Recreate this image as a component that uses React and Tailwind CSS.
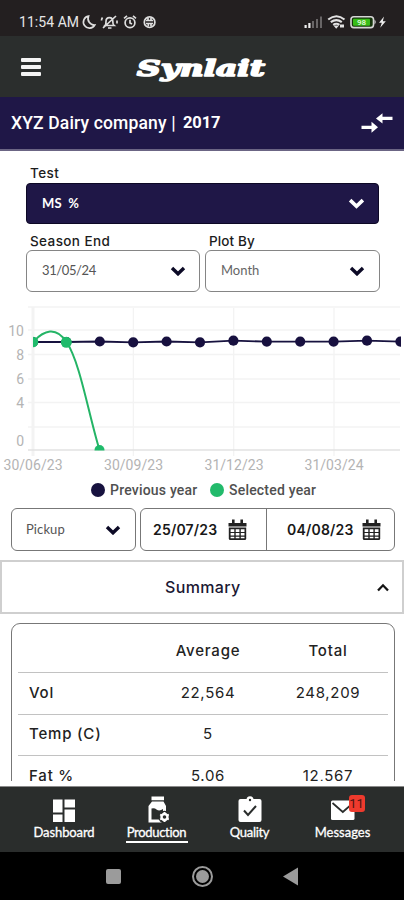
import React from "react";

const Chevron = ({ color = "#0c0a26", w = 16, className = "" }) => (
  <svg width={w} height={(w * 10) / 16} viewBox="0 0 16 10" className={className}>
    <path d="M2 2 L8 7.8 L14 2" fill="none" stroke={color} strokeWidth="3.4" />
  </svg>
);

const Calendar = () => (
  <svg width="19" height="22" viewBox="0 0 19 22" className="shrink-0">
    <path d="M0.5 4 h18 v3.4 h-18z M4 0.5 h2.6 v4 h-2.6z M12.4 0.5 h2.6 v4 h-2.6z" fill="#222" />
    <path d="M0.8 8.400 h17.4 v11.100 q0 1.5 -1.5 1.5 h-14.4 q-1.5 0 -1.5 -1.5z" fill="#222" />
    <path d="M2.600 10.200h3.700v2.700h-3.700z M7.700 10.200h3.700v2.700h-3.700z M12.800 10.200h3.700v2.700h-3.700z M2.600 14.100h3.700v2.400h-3.700z M7.700 14.100h3.700v2.400h-3.700z M12.800 14.100h3.700v2.400h-3.700z M2.600 17.700h3.700v1.600h-3.700z M7.700 17.700h3.700v1.600h-3.700z M12.800 17.700h3.700v1.600h-3.700z" fill="#fff" />
  </svg>
);

function StatusBar() {
  return (
    <div className="flex h-9 shrink-0 items-center bg-[#231f20] pt-2 pl-[19px] font-['Roboto',sans-serif] text-[#e6e6e6]">
      <span className="w-[61px] text-[14px] tracking-[0.05px] whitespace-nowrap">11:54 AM</span>
      <svg width="76" height="16" viewBox="80 14 76 16" fill="none" stroke="#dedede" strokeWidth="1.7" className="shrink-0">
        <path d="M88.5 16.2 a6 6 0 1 0 6.2 8.8 a6.4 6.4 0 0 1 -6.2 -8.8z" />
        <path d="M105 25.5 q1 -1 1 -4 q0 -3.8 3.4 -3.8 q3.4 0 3.4 3.8 q0 3 1.2 4z M108 28 h3.5 M103 28 L116 16 M101.5 20.5 q0 -1.5 1 -3 M117 20.5 v3" />
        <circle cx="130" cy="22.7" r="4.9" />
        <path d="M124 18.3 l3 -2.4 M136 18.3 l-3 -2.4 M130 19.8 v3.2 l2 1.1" />
        <circle cx="149.6" cy="22.2" r="5.3" />
        <path d="M146 20.5 h7 M146 23.5 h7 M148 18 v2 M151 18 v2 M148.3 24 v2.5 M151 24 v2.5" />
      </svg>
      <svg width="86" height="18" viewBox="302 13 86 18" className="ml-[146px] shrink-0">
        <path d="M304.5 25h2.2v3h-2.2z M308.3 23h2.2v5h-2.2z" fill="#eee" />
        <path d="M312 21h2v7h-2z M316 19h2v9h-2z M320 16.500h2v11.500h-2z" fill="#686566" />
        <g fill="none" stroke="#e2e2e2" strokeWidth="2.1">
          <path d="M328.200 19.500 q8.300 -6.500 16.300 0 M330.800 22.200 q5.600 -4.200 11 0 M333.200 24.800 q3.200 -2.200 6.200 0" />
        </g>
        <path d="M333.500 25.500 h5.500 l-2.800 3.200z M340 24.500h4v3h-4z" fill="#e2e2e2" />
        <rect x="351" y="16.800" width="22.500" height="10.800" rx="2.800" fill="#16350c" stroke="#d6d6d6" strokeWidth="1.600" />
        <rect x="353" y="18.700" width="17" height="7" rx="1" fill="#38bd18" />
        <path d="M374.500 19.500 q2.500 2.500 0 5z" fill="#d6d6d6" />
        <text x="361.500" y="25.200" textAnchor="middle" fontSize="8" fontWeight="700" fill="#d5f5c9" fontFamily="Roboto, sans-serif">98</text>
        <path d="M384 16.500 l-5 6.300 h2.800 l-1.600 5 l5.600 -6.600 h-3z" fill="#eee" />
      </svg>
    </div>
  );
}

function AppHeader() {
  return (
    <div className="flex h-[61px] shrink-0 items-center bg-[#2b2e2d] pl-[21px]">
      <div className="flex w-5 flex-col gap-[3px]">
        <div className="h-1 rounded-[1px] bg-[#f4f4f4]" />
        <div className="h-1 rounded-[1px] bg-[#f4f4f4]" />
        <div className="h-1 rounded-[1px] bg-[#f4f4f4]" />
      </div>
      <svg width="134" height="40" viewBox="0 0 134 40" className="ml-[93px]">
        <text x="3" y="28.500" fontFamily="'DejaVu Serif', serif" fontWeight="700" fontStyle="italic" fontSize="21.500" textLength="128" lengthAdjust="spacingAndGlyphs" fill="#fff" stroke="#fff" strokeWidth="1.600" strokeLinejoin="round">Synlait</text>
      </svg>
    </div>
  );
}

function TitleBar() {
  return (
    <div className="flex h-[54px] shrink-0 items-center border-b-2 border-[#6b6584] bg-[#1f1747] pl-[11px] font-['Roboto',sans-serif] text-white">
      <span className="w-[172px] text-[17.5px] font-medium tracking-[0.15px] whitespace-nowrap">XYZ Dairy company |</span>
      <span className="text-[16.5px] font-bold tracking-[-0.1px] whitespace-nowrap">2017</span>
      <svg width="32" height="20" viewBox="0 0 32 20" className="mr-[11px] ml-auto">
        <path d="M0.500 12.700h10v-3.900l6.500 5.500 -6.500 5.500v-3.900h-10z M31.500 3.700h-10v-3.500l-6.500 5.200 6.500 5.200v-3.500h10z" fill="#fff" />
      </svg>
    </div>
  );
}

const label = "flex items-center font-['Inter',sans-serif] text-[13.5px] font-medium tracking-[0.4px] text-[#1c1c1c]";

function Filters() {
  return (
    <div className="flex shrink-0 flex-col pt-[13px] pl-[26px]">
      <div className={label + " h-[19px] pl-1"}>Test</div>
      <div className="flex h-[41px] w-[353px] items-center justify-between rounded-[4px] border border-[#0d0825] bg-[#1f1747] pr-[13px] pl-[15px]">
        <span className="font-['Lato',sans-serif] text-[13px] font-bold tracking-[0.1px] whitespace-pre text-white">MS  %</span>
        <Chevron color="#fff" w={17} />
      </div>
      <div className="flex h-[26px] pt-[7px]">
        <div className={label + " h-5 w-[179px] pl-1"}>Season End</div>
        <div className={label + " h-5 pl-1 tracking-[0.1px]!"}>Plot By</div>
      </div>
      <div className="flex gap-[5px]">
        <div className="flex h-[42px] w-[174px] items-center justify-between rounded-[6px] border border-[#858585] bg-white pr-[13px] pl-[15px]">
          <span className="font-['Lato',sans-serif] text-[13px] tracking-[-0.4px] text-[#555]">31/05/24</span>
          <Chevron />
        </div>
        <div className="flex h-[42px] w-[175px] items-center justify-between rounded-[6px] border border-[#858585] bg-white pr-[14px] pl-[15px]">
          <span className="font-['Lato',sans-serif] text-[13px] tracking-[0px] text-[#666]">Month</span>
          <Chevron />
        </div>
      </div>
    </div>
  );
}

const previous = [342, 342, 341.5, 342.3, 341.5, 342.3, 340.7, 341.6, 341.6, 341.6, 340.7, 341.6];
const px = (i) => 33 + i * 33.4;

function Chart() {
  const line = previous.map((y, i) => px(i) + "," + y).join(" ");
  return (
    <svg width="404" height="186" viewBox="0 292 404 186" className="shrink-0">
      <g stroke="#f3f3f3" strokeWidth="1.300">
        {[307, 330, 354.500, 379, 402.500, 427].map((y) => (
          <line key={y} x1="28" x2="400" y1={y} y2={y} />
        ))}
        {[133.400, 233.700, 334].map((x) => (
          <line key={x} x1={x} x2={x} y1="308" y2="456" />
        ))}
        <line x1="33" x2="33" y1="307" y2="456" strokeWidth="3" />
        <line x1="28" x2="400" y1="450" y2="450" stroke="#e2e2e2" strokeWidth="1.500" />
      </g>
      <g fontFamily="Roboto, sans-serif" fontSize="14" fill="#b4b4b4">
        {[["10", 336], ["8", 360], ["6", 384], ["4", 407.500], ["0", 446]].map(([t, y]) => (
          <text key={t} x="24" y={y} textAnchor="end">{t}</text>
        ))}
        {[["30/06/23", 33], ["30/09/23", 133.500], ["31/12/23", 234], ["31/03/24", 334]].map(([t, x]) => (
          <text key={t} x={x - 29.500} y="470" fontSize="14" textLength="59">{t}</text>
        ))}
      </g>
      <clipPath id="plot"><rect x="33" y="300" width="368" height="150.500" /></clipPath>
      <g clipPath="url(#plot)">
        <polyline points={line} fill="none" stroke="#17123f" strokeWidth="1.800" />
        {previous.map((y, i) => (
          <circle key={i} cx={px(i)} cy={y} r="5.100" fill="#17103f" />
        ))}
        <path d="M33 342 C44 330 56 326 66.500 342 C80 362 88 412 99.500 450" fill="none" stroke="#24b466" strokeWidth="2" />
        <circle cx="33" cy="342" r="5.300" fill="#1fbb6b" />
        <circle cx="66.300" cy="342.300" r="5.500" fill="#1fbb6b" />
        <circle cx="99.500" cy="450" r="5" fill="#1fbb6b" />
      </g>
    </svg>
  );
}

function Legend() {
  const text = "font-['Roboto',sans-serif] text-[14px] font-medium whitespace-nowrap text-[#505050]";
  return (
    <div className="flex h-6 shrink-0 items-center pl-[91px]">
      <span className="mr-[5px] size-[14px] rounded-full bg-[#17123f]" />
      <span className={text + " w-[100px] tracking-[0.2px]"}>Previous year</span>
      <span className="mr-[5px] size-[14px] rounded-full bg-[#22ba6b]" />
      <span className={text + " tracking-[0.2px]"}>Selected year</span>
    </div>
  );
}

function PickupRow() {
  const date = "font-['Inter',sans-serif] text-[14px] font-semibold tracking-[0.2px] text-[#181818]";
  return (
    <div className="mt-[6px] flex h-[43px] shrink-0 gap-[4px] pl-[11px]">
      <div className="flex w-[125px] items-center justify-between rounded-[6px] border border-[#777] pr-[14px] pl-[14px]">
        <span className="font-['Lato',sans-serif] text-[13px] tracking-[0.1px] text-[#555]">Pickup</span>
        <Chevron />
      </div>
      <div className="flex w-[255px] rounded-[6px] border border-[#777]">
        <div className="flex w-[126px] items-center justify-between border-r border-[#777] pr-[19px] pl-[12px]">
          <span className={date}>25/07/23</span>
          <Calendar />
        </div>
        <div className="flex flex-1 items-center justify-between pr-[13px] pl-[20px]">
          <span className={date}>04/08/23</span>
          <Calendar />
        </div>
      </div>
    </div>
  );
}

const rows = [
  ["Vol", "22,564", "248,209"],
  ["Temp (C)", "5", ""],
  ["Fat %", "5.06", "12,567"],
];

function Summary() {
  return (
    <>
      <div className="mt-[9px] flex h-[54px] shrink-0 items-center border-2 border-[#cfcfcf] pr-[13px] font-['Inter',sans-serif]">
        <span className="ml-[163px] text-[16px] font-medium tracking-[0.35px] text-[#1b1833]">Summary</span>
        <svg width="12" height="9" viewBox="0 0 12 9" className="ml-auto">
          <path d="M1 7.500 L6 2.300 L11 7.500" fill="none" stroke="#151515" strokeWidth="2.300" />
        </svg>
      </div>
      <div className="mt-[9px] h-[158px] shrink-0 overflow-hidden pl-[11px] font-['Inter',sans-serif] text-[15px] font-medium tracking-[0.8px] text-[#222]">
        <div className="h-[200px] w-[384px] rounded-[9px] border border-[#777] px-[6px]">
          <div className="flex h-[49px] items-center border-b border-[#c2c2c2] pt-[7px]">
            <span className="w-[130px] pl-[11px]" />
            <span className="w-[120px] text-center">Average</span>
            <span className="w-[120px] text-center">Total</span>
          </div>
          {rows.map(([name, avg, total]) => (
            <div key={name} className="flex h-[41.500px] items-center border-b border-[#c2c2c2] pb-px">
              <span className="w-[130px] pl-[11px]">{name}</span>
              <span className="w-[120px] text-center font-normal tracking-[0.7px]">{avg}</span>
              <span className="w-[120px] text-center font-normal tracking-[0.7px]">{total}</span>
            </div>
          ))}
        </div>
      </div>
    </>
  );
}

function TabBar() {
  const text = "font-['Lato',sans-serif] text-[13px] leading-[15px] whitespace-nowrap text-white [-webkit-text-stroke:0.3px_white]";
  return (
    <div className="mt-[5px] flex h-[66px] shrink-0 border-t border-[#8a8a8a] bg-[#2a2d2c] pt-[9px] pl-[18px]">
      <div className="flex w-[92px] flex-col items-center">
        <svg width="24" height="29" viewBox="0 0 24 29">
          <path d="M1 3.500h9.500v13h-9.500z M12.500 3.500h10.500v8h-10.500z M1 18.500h9.500v7.500h-9.500z M12.500 13.500h10.500v12.500h-10.500z" fill="#fff" />
        </svg>
        <span className={text + " tracking-[-0.1px]"}>Dashboard</span>
      </div>
      <div className="flex w-[93px] flex-col items-center">
        <svg width="24" height="29" viewBox="0 0 24 29">
          <path d="M6.500 0.500h12.500v3.800h-12.500z M7 5.500h11.500l2.500 4.500v16.500h-17.500v-16.500z" fill="#fff" />
          <path d="M6.500 12.500 q3 -1 5 1 q3 2 6.500 -.5 v10.500 h-11.500z" fill="#2a2d2c" />
          <circle cx="19.500" cy="21" r="6.300" fill="#2a2d2c" />
          <circle cx="19.500" cy="21" r="3" fill="none" stroke="#fff" strokeWidth="2.400" />
          <path d="M19.500 16v2.500 M19.500 23.500v2.500 M15.200 18.500l2.200 1.250 M21.600 22.250l2.200 1.250 M15.200 23.500l2.200 -1.250 M21.600 19.750l2.200 -1.250" stroke="#fff" strokeWidth="2" />
        </svg>
        <span className={text + " tracking-[-0.3px]"}>Production</span>
        <span className="mt-[1px] h-[2px] w-[62px] shrink-0 bg-white" />
      </div>
      <div className="flex w-[93px] flex-col items-center">
        <svg width="26" height="29" viewBox="0 0 26 29">
          <rect x="1.500" y="3" width="23" height="23" rx="2" fill="#fff" />
          <circle cx="13" cy="3.700" r="3.500" fill="#fff" />
          <circle cx="13" cy="4" r="1.200" fill="#2a2d2c" />
          <path d="M7 14.500 l4 4.500 8 -9" fill="none" stroke="#2a2d2c" strokeWidth="2" />
        </svg>
        <span className={text + " tracking-[-0.3px]"}>Quality</span>
      </div>
      <div className="flex w-[93px] flex-col items-center">
        <div className="relative h-[29px] w-6">
          <svg width="24" height="29" viewBox="0 0 24 29">
            <rect x="0" y="4.500" width="23.500" height="19.500" rx="1.500" fill="#fff" />
            <path d="M1.500 7 l10.300 9 10.300 -9" fill="none" stroke="#2a2d2c" strokeWidth="1.700" />
          </svg>
          <span className="absolute -top-px left-[18px] flex h-[17px] w-4 items-center justify-center rounded-[3px] bg-[#ee3a2d] font-['Roboto',sans-serif] text-[13px] text-[#4c1511]">11</span>
        </div>
        <span className={text}>Messages</span>
      </div>
    </div>
  );
}

function SystemNav() {
  return (
    <div className="flex h-12 shrink-0 items-center bg-black pl-[106px]">
      <div className="size-[15px] rounded-[2px] bg-[#9b9b9b]" />
      <div className="ml-[71px] flex size-[21px] items-center justify-center rounded-full border-2 border-[#9b9b9b]">
        <div className="size-[13px] rounded-full bg-[#9b9b9b]" />
      </div>
      <svg width="15" height="19" viewBox="0 0 15 19" className="ml-[70px]">
        <path d="M0 9.500 L15 0.500 V18.500z" fill="#9b9b9b" />
      </svg>
    </div>
  );
}

export default function App() {
  return (
    <div className="flex h-[900px] w-[404px] flex-col overflow-hidden bg-white">
      <StatusBar />
      <AppHeader />
      <TitleBar />
      <Filters />
      <Chart />
      <Legend />
      <PickupRow />
      <Summary />
      <TabBar />
      <SystemNav />
    </div>
  );
}
